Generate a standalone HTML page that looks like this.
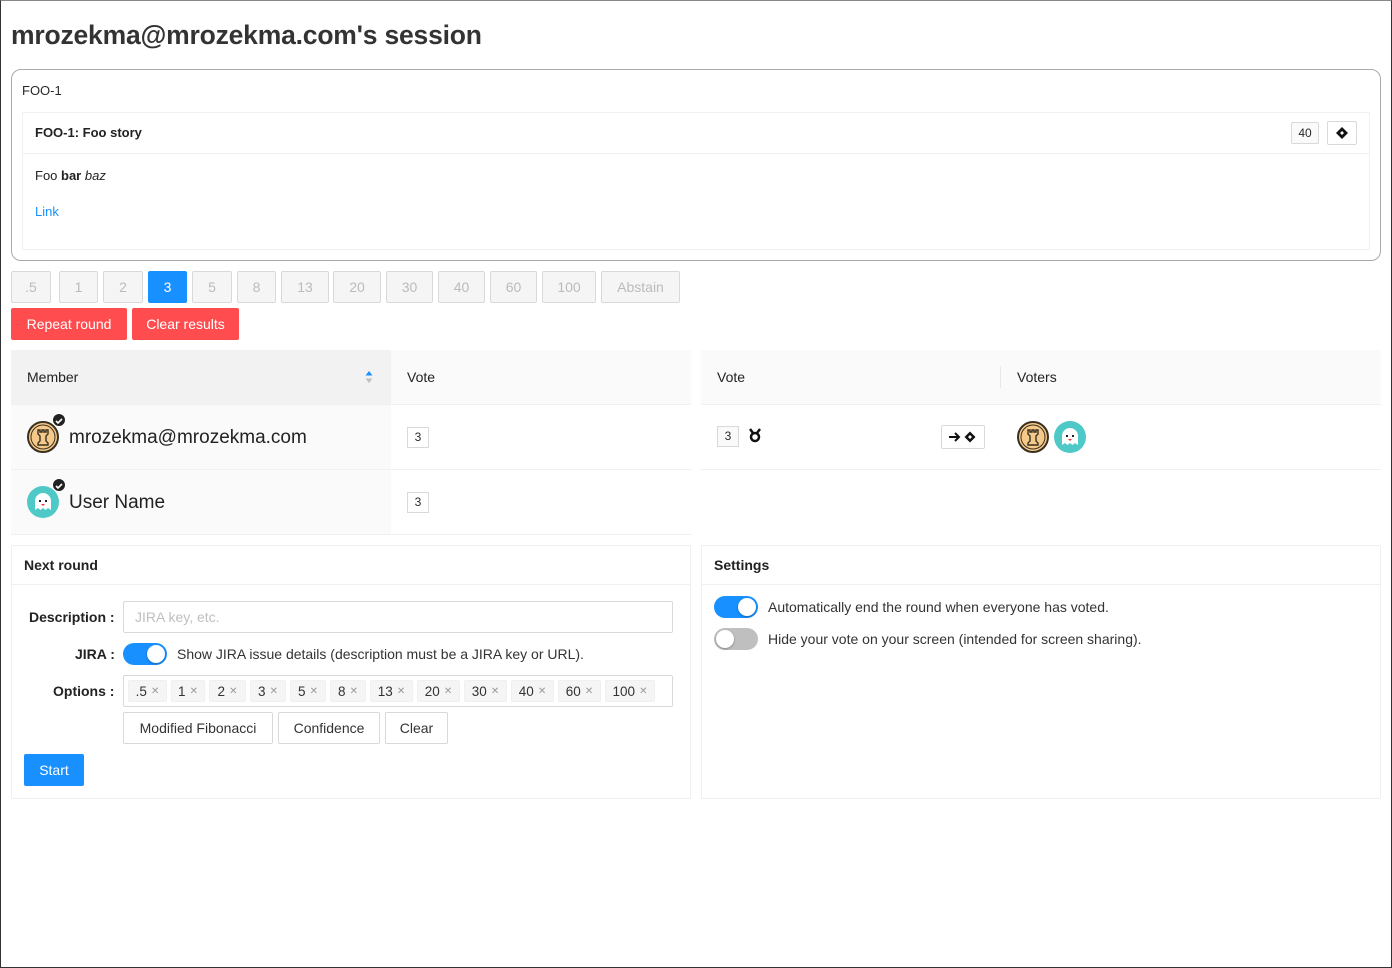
<!DOCTYPE html>
<html><head><meta charset="utf-8"><style>
*{box-sizing:border-box}
body{margin:0;width:1392px;height:968px;font-family:"Liberation Sans",sans-serif;font-size:14px;color:rgba(0,0,0,.85);background:#fff;position:relative;overflow:hidden}
.frame{position:absolute;left:0;top:0;width:1392px;height:968px;border:1px solid #333;border-top-color:#888}
.a{position:absolute}
h1{position:absolute;left:11px;top:20px;margin:0;font-size:26.5px;font-weight:bold;color:#333;letter-spacing:-0.2px}
.btn{position:absolute;height:32px;border:1px solid #d9d9d9;border-radius:2px;display:flex;align-items:center;justify-content:center;font-size:14px}
.vb{top:271px;background:#f5f5f5;color:#bbb}
.red{background:#ff4d4f;border-color:#ff4d4f;color:#fff;top:308px}
.tags{display:flex;flex-wrap:nowrap;white-space:nowrap;gap:4px}
.tag{display:inline-flex;align-items:center;justify-content:center;height:22px;background:#f5f5f5;border:1px solid #f0f0f0;border-radius:2px;font-size:13.5px;color:#333}
.tag i{font-style:normal;color:#999;font-size:10px;margin-left:4px}
.sw{position:absolute;width:44px;height:22px;border-radius:11px}
.sw b{position:absolute;top:2px;width:18px;height:18px;border-radius:50%;background:#fff;box-shadow:0 1px 2px rgba(0,0,0,.3)}
.chk{position:absolute;width:14px;height:14px;border-radius:50%;background:#222;border:1px solid #fff}
</style></head><body>
<div class="frame"></div>
<h1>mrozekma@mrozekma.com's session</h1>

<div class="a" style="left:11px;top:69px;width:1370px;height:192px;border:1px solid #aaa;border-radius:10px"></div>
<div class="a" style="left:22px;top:83px;font-size:13px">FOO-1</div>
<div class="a" style="left:22px;top:112px;width:1348px;height:138px;border:1px solid #f0f0f0"></div>
<div class="a" style="left:23px;top:153px;width:1346px;height:1px;background:#f0f0f0"></div>
<div class="a" style="left:35px;top:125px;font-size:13px;font-weight:600;color:#222">FOO-1: Foo story</div>
<div class="a" style="left:1291px;top:122px;width:28px;height:22px;border:1px solid #d9d9d9;border-radius:2px;background:#fafafa;font-size:12px;text-align:center;line-height:20px">40</div>
<div class="a" style="left:1327px;top:121px;width:30px;height:24px;border:1px solid #d9d9d9;border-radius:2px;background:#fff"><svg width="30" height="24" style="position:absolute;left:-1px;top:-1px"><path d="M15 6l6 6-6 6-6-6z" fill="#111"/><path d="M15 10l2 2-2 2-2-2z" fill="#fff"/></svg></div>
<div class="a" style="left:35px;top:168px;font-size:13px;color:#222">Foo <b>bar</b> <i>baz</i></div>
<div class="a" style="left:35px;top:204px;font-size:13px;color:#1890ff">Link</div>

<div class="btn vb" style="left:11px;width:40px">.5</div>
<div class="btn vb" style="left:59px;width:39px">1</div>
<div class="btn vb" style="left:103px;width:40px">2</div>
<div class="btn vb" style="left:148px;width:39px;background:#1890ff;border-color:#1890ff;color:#fff">3</div>
<div class="btn vb" style="left:192px;width:40px">5</div>
<div class="btn vb" style="left:237px;width:39px">8</div>
<div class="btn vb" style="left:281px;width:48px">13</div>
<div class="btn vb" style="left:333px;width:48px">20</div>
<div class="btn vb" style="left:386px;width:47px">30</div>
<div class="btn vb" style="left:438px;width:47px">40</div>
<div class="btn vb" style="left:490px;width:47px">60</div>
<div class="btn vb" style="left:542px;width:54px">100</div>
<div class="btn vb" style="left:601px;width:79px">Abstain</div>
<div class="btn red" style="left:11px;width:116px">Repeat round</div>
<div class="btn red" style="left:132px;width:107px">Clear results</div>

<!-- left table -->
<div class="a" style="left:11px;top:350px;width:380px;height:54px;background:#f2f2f2"></div>
<div class="a" style="left:391px;top:350px;width:300px;height:54px;background:#fafafa"></div>
<div class="a" style="left:11px;top:404px;width:680px;height:1px;background:#f0f0f0"></div>
<div class="a" style="left:27px;top:369px;color:#222">Member</div>
<svg class="a" style="left:364px;top:370px" width="10" height="14"><path d="M5 1l3.5 4.5h-7z" fill="#1890ff"/><path d="M5 13l3.5-4.5h-7z" fill="#bfbfbf"/></svg>
<div class="a" style="left:407px;top:369px;color:#222">Vote</div>
<div class="a" style="left:11px;top:405px;width:380px;height:129px;background:#fafafa"></div>
<div class="a" style="left:11px;top:469px;width:680px;height:1px;background:#f0f0f0"></div>
<div class="a" style="left:11px;top:534px;width:680px;height:1px;background:#f0f0f0"></div>

<svg class="a" style="left:27px;top:421px" width="32" height="32"><circle cx="16" cy="16" r="15" fill="#f5c98a" stroke="#3a3020" stroke-width="2"/><circle cx="16" cy="16" r="12" fill="none" stroke="#3a3020" stroke-width="1"/><path d="M11 9h2v2h2V9h2v2h2V9h2v4l-2 2v5l2 2v2H11v-2l2-2v-5l-2-2z" fill="#f5c98a" stroke="#3a3020" stroke-width="1.4"/></svg>
<div class="chk" style="left:52px;top:413px"><svg width="12" height="12"><path d="M3 6l2 2 4-4" stroke="#fff" stroke-width="1.6" fill="none"/></svg></div>
<div class="a" style="left:69px;top:427px;font-size:19px;color:#222">mrozekma@mrozekma.com</div>
<div class="a" style="left:407px;top:427px;width:22px;height:21px;border:1px solid #d9d9d9;background:#fff;font-size:12px;text-align:center;line-height:19px">3</div>

<svg class="a" style="left:27px;top:486px" width="32" height="32"><circle cx="16" cy="16" r="16" fill="#4ec9c7"/><path d="M8 24V15a8 8 0 0 1 16 0v9l-3-2-2.5 2-2.5-2-2.5 2-2.5-2z" fill="#fff"/><rect x="12" y="14" width="2" height="2" fill="#223"/><rect x="18" y="14" width="2" height="2" fill="#223"/><path d="M14 18h4l-2 2z" fill="#e33"/></svg>
<div class="chk" style="left:52px;top:478px"><svg width="12" height="12"><path d="M3 6l2 2 4-4" stroke="#fff" stroke-width="1.6" fill="none"/></svg></div>
<div class="a" style="left:69px;top:492px;font-size:19px;color:#222">User Name</div>
<div class="a" style="left:407px;top:492px;width:22px;height:21px;border:1px solid #d9d9d9;background:#fff;font-size:12px;text-align:center;line-height:19px">3</div>

<!-- right table -->
<div class="a" style="left:701px;top:350px;width:680px;height:54px;background:#fafafa"></div>
<div class="a" style="left:1000px;top:366px;width:1px;height:22px;background:#e8e8e8"></div>
<div class="a" style="left:701px;top:404px;width:680px;height:1px;background:#f0f0f0"></div>
<div class="a" style="left:701px;top:469px;width:680px;height:1px;background:#f0f0f0"></div>
<div class="a" style="left:717px;top:369px;color:#222">Vote</div>
<div class="a" style="left:1017px;top:369px;color:#222">Voters</div>
<div class="a" style="left:717px;top:426px;width:22px;height:21px;border:1px solid #d9d9d9;background:#fafafa;font-size:12px;text-align:center;line-height:19px">3</div>
<svg class="a" style="left:747px;top:427px" width="16" height="16"><path d="M3 2l3 4M13 2l-3 4" stroke="#111" stroke-width="2.5"/><circle cx="8" cy="10" r="4" fill="none" stroke="#111" stroke-width="2.5"/></svg>
<div class="a" style="left:941px;top:425px;width:44px;height:24px;border:1px solid #d9d9d9;border-radius:2px;background:#fff"><svg width="44" height="24" style="position:absolute;left:-1px;top:-1px"><path d="M8 12h10M14 8l4 4-4 4" stroke="#111" stroke-width="2" fill="none"/><path d="M29 6.5l5.5 5.5-5.5 5.5-5.5-5.5z" fill="#111"/><path d="M29 10l2 2-2 2-2-2z" fill="#fff"/></svg></div>
<svg class="a" style="left:1017px;top:421px" width="32" height="32"><circle cx="16" cy="16" r="15" fill="#f5c98a" stroke="#3a3020" stroke-width="2"/><circle cx="16" cy="16" r="12" fill="none" stroke="#3a3020" stroke-width="1"/><path d="M11 9h2v2h2V9h2v2h2V9h2v4l-2 2v5l2 2v2H11v-2l2-2v-5l-2-2z" fill="#f5c98a" stroke="#3a3020" stroke-width="1.4"/></svg>
<svg class="a" style="left:1054px;top:421px" width="32" height="32"><circle cx="16" cy="16" r="16" fill="#4ec9c7"/><path d="M8 24V15a8 8 0 0 1 16 0v9l-3-2-2.5 2-2.5-2-2.5 2-2.5-2z" fill="#fff"/><rect x="12" y="14" width="2" height="2" fill="#223"/><rect x="18" y="14" width="2" height="2" fill="#223"/><path d="M14 18h4l-2 2z" fill="#e33"/></svg>

<!-- Next round card -->
<div class="a" style="left:11px;top:545px;width:680px;height:254px;border:1px solid #f0f0f0"></div>
<div class="a" style="left:12px;top:584px;width:678px;height:1px;background:#f0f0f0"></div>
<div class="a" style="left:24px;top:557px;color:#222;font-weight:600">Next round</div>
<div class="a" style="left:29px;top:609px;font-weight:bold;color:#222">Description :</div>
<div class="a" style="left:123px;top:601px;width:550px;height:32px;border:1px solid #d9d9d9;border-radius:2px;padding:7px 11px;color:#bfbfbf">JIRA key, etc.</div>
<div class="a" style="left:75px;top:646px;font-weight:bold;color:#222">JIRA :</div>
<div class="sw" style="left:123px;top:643px;background:#1890ff"><b style="left:24px"></b></div>
<div class="a" style="left:177px;top:646px;color:#333">Show JIRA issue details (description must be a JIRA key or URL).</div>
<div class="a" style="left:53px;top:683px;font-weight:bold;color:#222">Options :</div>
<div class="a" style="left:123px;top:675px;width:550px;height:32px;border:1px solid #d9d9d9;border-radius:2px;padding:4px 4px;overflow:hidden"><div class="tags">
<span class="tag" style="width:39px">.5<i>✕</i></span><span class="tag" style="width:34px">1<i>✕</i></span><span class="tag" style="width:37px">2<i>✕</i></span><span class="tag" style="width:36px">3<i>✕</i></span><span class="tag" style="width:36px">5<i>✕</i></span><span class="tag" style="width:36px">8<i>✕</i></span><span class="tag" style="width:43px">13<i>✕</i></span><span class="tag" style="width:43px">20<i>✕</i></span><span class="tag" style="width:43px">30<i>✕</i></span><span class="tag" style="width:43px">40<i>✕</i></span><span class="tag" style="width:43px">60<i>✕</i></span><span class="tag" style="width:50px">100<i>✕</i></span></div></div>
<div class="btn" style="left:123px;top:712px;width:150px;color:#333;background:#fff">Modified Fibonacci</div>
<div class="btn" style="left:278px;top:712px;width:102px;color:#333;background:#fff">Confidence</div>
<div class="btn" style="left:385px;top:712px;width:63px;color:#333;background:#fff">Clear</div>
<div class="btn" style="left:24px;top:754px;width:60px;background:#1890ff;border-color:#1890ff;color:#fff">Start</div>

<!-- Settings card -->
<div class="a" style="left:701px;top:545px;width:680px;height:254px;border:1px solid #f0f0f0"></div>
<div class="a" style="left:702px;top:584px;width:678px;height:1px;background:#f0f0f0"></div>
<div class="a" style="left:714px;top:557px;color:#222;font-weight:600">Settings</div>
<div class="sw" style="left:714px;top:596px;background:#1890ff"><b style="left:24px"></b></div>
<div class="a" style="left:768px;top:599px;color:#333">Automatically end the round when everyone has voted.</div>
<div class="sw" style="left:714px;top:628px;background:#bfbfbf"><b style="left:2px"></b></div>
<div class="a" style="left:768px;top:631px;color:#333">Hide your vote on your screen (intended for screen sharing).</div>
</body></html>
